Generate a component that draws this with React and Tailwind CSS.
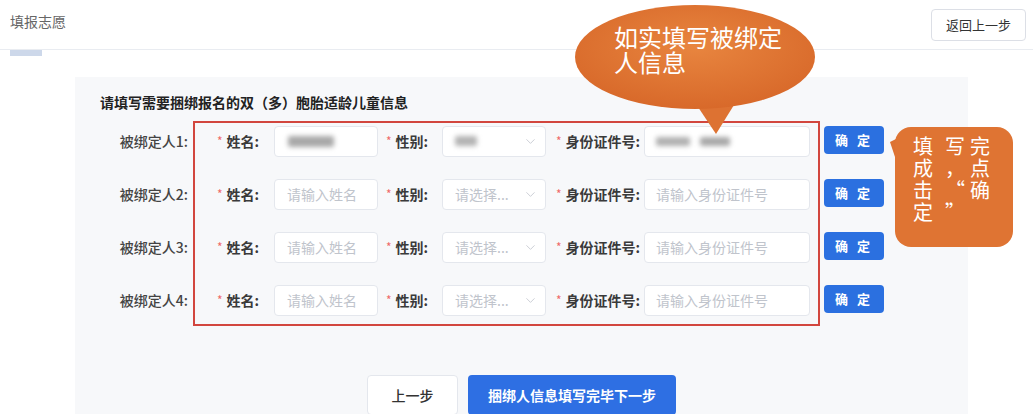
import React from "react";
import { ChevronDown } from "lucide-react";

function Req({ text, w }) {
  return (
    <div className={`flex items-center h-[30px] ${w} text-[14px] font-semibold text-[#3a3a3a]`}>
      <span className="text-[#ef6a6a] text-[12px] mr-[4px] font-normal">*</span>
      <span>{text}:</span>
    </div>
  );
}

function Row({ filled }) {
  return (
    <div className="h-[30px] flex items-center">
      <Req text="姓名" w="w-[57px]" />
      <div className="w-[104px] h-[31px] bg-white border border-[#e4e7ed] rounded-[4px] flex items-center px-[12px] text-[14px] text-[#c0c4cc]">
        {filled ? <div className="w-[46px] h-[11px] ml-[1px] bg-[#a8a8a8] rounded-[2px] blur-[2.5px]" /> : "请输入姓名"}
      </div>
      <div className="w-[8px]" />
      <Req text="性别" w="w-[56px]" />
      <div className="w-[104px] h-[31px] bg-white border border-[#e4e7ed] rounded-[4px] flex items-center justify-between pl-[12px] pr-[7px] text-[14px] text-[#c0c4cc]">
        {filled ? <div className="w-[22px] h-[10px] bg-[#b3b3b3] rounded-[2px] blur-[2.5px]" /> : <span>请选择...</span>}
        <ChevronDown size={15} strokeWidth={1.3} className="text-[#c0c4cc]" />
      </div>
      <div className="w-[10px]" />
      <Req text="身份证件号" w="w-[88px]" />
      <div className="w-[166px] h-[31px] bg-white border border-[#e4e7ed] rounded-[4px] flex items-center px-[11px] text-[14px] text-[#c0c4cc]">
        {filled ? (
          <div className="flex items-center gap-[10px]">
            <div className="w-[34px] h-[9px] bg-[#b0b0b0] rounded-[2px] blur-[2.5px]" />
            <div className="w-[30px] h-[9px] bg-[#a8a8a8] rounded-[2px] blur-[2.5px]" />
          </div>
        ) : (
          "请输入身份证件号"
        )}
      </div>
    </div>
  );
}

export default function App() {
  const rows = [1, 2, 3, 4];
  return (
    <div className="w-[1033px] h-[414px] overflow-hidden bg-white relative font-['Noto_Sans_CJK_SC',sans-serif]">
      {/* header */}
      <div className="h-[50px] border-b border-[#e9ecf1] flex justify-between pl-[10px] pr-[7px]">
        <div className="pt-[12px] text-[14px] leading-[18px] text-[#666]">填报志愿</div>
        <button className="mt-[9px] h-[32px] w-[95px] bg-white border border-[#dcdfe6] rounded-[4px] text-[13px] text-[#333]">
          返回上一步
        </button>
      </div>
      <div className="ml-[10px] w-[32px] h-[6px] bg-[#cdd8ea]" />

      {/* card */}
      <div className="mt-[21px] ml-[75px] w-[893px] h-[400px] bg-[#f7f8fa] pt-[18px]">
        <div className="pl-[25px] text-[14px] leading-[14px] font-bold text-[#222]">
          请填写需要捆绑报名的双（多）胞胎适龄儿童信息
        </div>
        <div className="mt-[12px] flex">
          <div className="w-[118px] pt-[5px] flex flex-col gap-[23px]">
            {rows.map((n) => (
              <div key={n} className="h-[30px] flex items-center justify-end pr-[5px] text-[14px] font-medium text-[#444]">
                被绑定人{n}:
              </div>
            ))}
          </div>
          <div className="w-[627px] border-2 border-[#d2463e] pt-[3px] pb-[9px] pl-[22px] flex flex-col gap-[23px]">
            {rows.map((n) => (
              <Row key={n} filled={n === 1} />
            ))}
          </div>
          <div className="ml-[4px] pt-[4px] flex flex-col gap-[23px]">
            {rows.map((n) => (
              <div key={n} className="h-[30px] flex items-center">
                <button className="w-[60px] h-[28px] bg-[#2b70e0] rounded-[4px] text-white text-[13px] font-semibold tracking-[3px]">
                  确 定
                </button>
              </div>
            ))}
          </div>
        </div>
        <div className="mt-[49px] flex justify-center gap-[10px]">
          <button className="w-[91px] h-[40px] bg-white border border-[#e4e7ed] rounded-[4px] text-[14px] font-medium text-[#333]">
            上一步
          </button>
          <button className="w-[208px] h-[40px] bg-[#2e6fe3] rounded-[4px] text-[14px] font-semibold text-white">
            捆绑人信息填写完毕下一步
          </button>
        </div>
      </div>

      {/* top callout */}
      <svg className="absolute left-[570px] top-0" width="260" height="140" viewBox="0 0 260 140">
        <defs>
          <radialGradient id="g1" cx="50%" cy="40%" r="60%">
            <stop offset="0%" stopColor="#e8853f" />
            <stop offset="100%" stopColor="#d8692a" />
          </radialGradient>
        </defs>
        <polygon points="118,92 172,92 146,134" fill="#dd7232" />
        <ellipse cx="125" cy="57" rx="120" ry="52" fill="url(#g1)" />
      </svg>
      <div className="absolute left-[614px] top-[24px] text-[24px] leading-[25px] text-white">
        如实填写被绑定
        <br />
        人信息
      </div>

      {/* right callout */}
      <svg className="absolute left-[886px] top-[136px]" width="14" height="30" viewBox="0 0 14 30">
        <polygon points="12,2 4,6 10,24" fill="#dd7232" />
      </svg>
      <div className="absolute left-[895px] top-[127px] w-[118px] h-[120px] rounded-[16px] bg-[#df7433] pl-[18px] pt-[8px]">
        <div className="grid grid-cols-[32px_25px_24px] text-[20px] leading-[22px] text-white">
          <span>填</span>
          <span>写</span>
          <span>完</span>
          <span>成</span>
          <span>，</span>
          <span>点</span>
          <span>击</span>
          <span>“</span>
          <span>确</span>
          <span>定</span>
          <span>”</span>
          <span></span>
        </div>
      </div>
    </div>
  );
}
